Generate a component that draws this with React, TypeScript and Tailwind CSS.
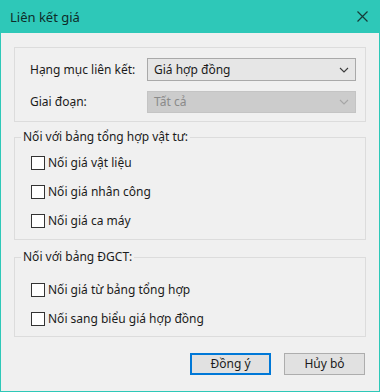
import React from 'react';

const font = { fontFamily: '"Noto Sans", "Open Sans", sans-serif' };

function Chevron({ disabled }: { disabled?: boolean }) {
  return (
    <svg width="10" height="6" viewBox="0 0 10 6" fill="none" className="shrink-0">
      <path d="M1 1l4 4 4-4" stroke={disabled ? '#a6a6a6' : '#3c3c3c'} strokeWidth="1.1" />
    </svg>
  );
}

function Select({ value, disabled }: { value: string; disabled?: boolean }) {
  return (
    <div
      className={
        disabled
          ? 'flex h-[22px] w-[209px] items-center justify-between border border-[#c4c4c4] bg-[#cccccc] pl-[6px] pr-[6px] text-[#8a8a8a]'
          : 'flex h-[23px] w-[209px] items-center justify-between border border-[#a9a9a9] bg-[#e6e6e6] pl-[6px] pr-[6px] text-[#1b1b1b]'
      }
    >
      <span>{value}</span>
      <Chevron disabled={disabled} />
    </div>
  );
}

function Check({ label }: { label: string }) {
  return (
    <label className="flex h-[20px] items-center gap-[3px] pl-[16px]">
      <span className="h-[14px] w-[14px] border border-[#333333] bg-white" />
      <span>{label}</span>
    </label>
  );
}

export default function App() {
  return (
    <div
      className="flex h-[392px] w-[380px] flex-col border-x border-b border-[#2ec8b8] bg-[#f0f0f0] text-[12px] leading-[16px] text-[#1b1b1b]"
      style={font}
    >
      {/* title bar */}
      <div className="-mx-px flex h-[33px] shrink-0 items-center justify-between bg-[#2ec8b8] pl-[10px] pr-[12px]">
        <span className="text-[13px] text-[#0f2b28]">Liên kết giá</span>
        <svg width="11" height="11" viewBox="0 0 11 11">
          <path d="M0.5 0.5l10 10M10.5 0.5l-10 10" stroke="#163c38" strokeWidth="1.2" />
        </svg>
      </div>

      <div className="flex flex-col px-[13px]">
        <div className="mt-[14px] flex flex-col gap-[10px] border border-[#dcdcdc] pb-[8px] pl-[15px] pr-[9px] pt-[10px]">
          <div className="flex items-center justify-between">
            <span>Hạng mục liên kết:</span>
            <Select value="Giá hợp đồng" />
          </div>
          <div className="flex items-center justify-between">
            <span>Giai đoạn:</span>
            <Select value="Tất cả" disabled />
          </div>
        </div>

        <fieldset className="mt-[7px] border border-[#dcdcdc] pb-[8px]">
          <legend className="ml-[6px] px-[2px]">Nối với bảng tổng hợp vật tư:</legend>
          <div className="flex flex-col gap-[9px] pt-[8px]">
            <Check label="Nối giá vật liệu" />
            <Check label="Nối giá nhân công" />
            <Check label="Nối giá ca máy" />
          </div>
        </fieldset>

        <fieldset className="mt-[9px] border border-[#dcdcdc] pb-[7px]">
          <legend className="ml-[6px] px-[2px]">Nối với bảng ĐGCT:</legend>
          <div className="flex flex-col gap-[9px] pt-[15px]">
            <Check label="Nối giá từ bảng tổng hợp" />
            <Check label="Nối sang biểu giá hợp đồng" />
          </div>
        </fieldset>

        <div className="mt-[16px] flex justify-end gap-[13px] pr-px">
          <button className="h-[22px] w-[81px] border-2 border-[#0078d7] bg-[#e1e1e1]">Đồng ý</button>
          <button className="h-[22px] w-[81px] border border-[#adadad] bg-[#e1e1e1]">Hủy bỏ</button>
        </div>
      </div>
    </div>
  );
}
